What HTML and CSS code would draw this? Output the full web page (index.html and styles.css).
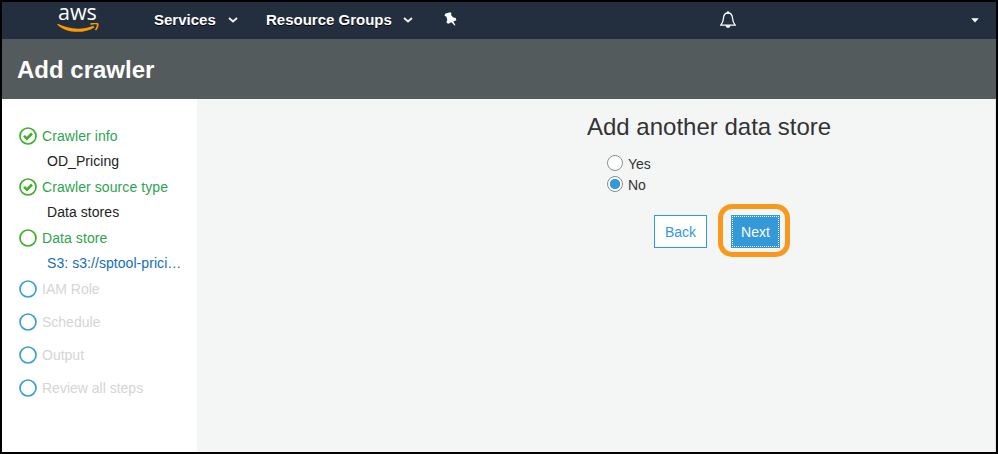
FILE: index.html
```html
<!DOCTYPE html>
<html lang="en">
<head>
<meta charset="utf-8">
<title>Add crawler</title>
<link rel="stylesheet" href="styles.css">
</head>
<body>
<div class="window">
  <nav class="topbar">
    <a class="logo"><span class="logo-text">aws</span>
      <svg class="smile" width="42" height="10" viewBox="0 0 42 10"><path d="M0.800 .8C11 6.300 25 7.300 36.300 2.800L37.300 4.400C27 10.800 10 10.600 .3 1.700Z" fill="#f90"/><path d="M33.500 1.200C36.500 .1 40 .1 40.600 .9C41.200 2 40 5.300 38.500 7" fill="none" stroke="#f90" stroke-width="1.700"/></svg>
    </a>
    <a class="menu services">Services</a>
    <svg class="chev" width="10" height="6" viewBox="0 0 10 6"><path d="M1 1L5 4.500L9 1" fill="none" stroke="#eee" stroke-width="2"/></svg>
    <a class="menu groups">Resource Groups</a>
    <svg class="chev" width="10" height="6" viewBox="0 0 10 6"><path d="M1 1L5 4.500L9 1" fill="none" stroke="#eee" stroke-width="2"/></svg>
    <svg class="pin" width="13" height="14" viewBox="0 0 13 14"><path d="M1.500 1.500L6.300 .2L7.500 1.500L7 2.800L8.900 5.300L11.700 6L12.400 8.300L9.300 9.500L11.500 13.200L10.500 13.600L7.500 10.300L4.200 11.800L2.400 10.400L3.300 7.500L2.200 4.600L.4 3.800Z" fill="#fff"/></svg>
    <svg class="bell" width="16" height="18" viewBox="0 0 16 18"><path d="M8 2C4.700 2 3.700 4.200 3.500 7C3.300 10.500 2.600 12 .8 14.100H15.200C13.400 12 12.700 10.500 12.500 7C12.300 4.200 11.300 2 8 2Z" fill="none" stroke="#fff" stroke-width="1.300"/><circle cx="8" cy="1.500" r="1.200" fill="#fff"/><path d="M5.500 14.500H10.500C10.200 17.600 5.800 17.600 5.500 14.500Z" fill="#fff"/></svg>
    <svg class="caret" width="8" height="5" viewBox="0 0 8 5"><path d="M.2 .3H7.800L4 4.600Z" fill="#fff"/></svg>
  </nav>
  <header class="heading"><h1>Add crawler</h1></header>
  <div class="body">
    <aside class="steps">
      <div class="step done"><svg class="ring" viewBox="0 0 18 18"><circle cx="9" cy="9" r="8"/><path d="M5 8.900L7.900 11.700L13 6.500"/></svg><span>Crawler info</span></div>
      <div class="detail">OD_Pricing</div>
      <div class="step done"><svg class="ring" viewBox="0 0 18 18"><circle cx="9" cy="9" r="8"/><path d="M5 8.900L7.900 11.700L13 6.500"/></svg><span>Crawler source type</span></div>
      <div class="detail">Data stores</div>
      <div class="step done"><svg class="ring" viewBox="0 0 18 18"><circle cx="9" cy="9" r="8"/></svg><span>Data store</span></div>
      <div class="detail link">S3: s3://sptool-prici…</div>
      <div class="step todo"><svg class="ring" viewBox="0 0 18 18"><circle cx="9" cy="9" r="8"/></svg><span>IAM Role</span></div>
      <div class="step todo"><svg class="ring" viewBox="0 0 18 18"><circle cx="9" cy="9" r="8"/></svg><span>Schedule</span></div>
      <div class="step todo"><svg class="ring" viewBox="0 0 18 18"><circle cx="9" cy="9" r="8"/></svg><span>Output</span></div>
      <div class="step todo"><svg class="ring" viewBox="0 0 18 18"><circle cx="9" cy="9" r="8"/></svg><span>Review all steps</span></div>
    </aside>
    <main class="content">
      <h2>Add another data store</h2>
      <div class="options">
        <label class="option"><span class="radio"></span>Yes</label>
        <label class="option"><span class="radio on"></span>No</label>
      </div>
      <div class="actions">
        <button class="btn back">Back</button>
        <div class="highlight"><button class="btn next">Next</button></div>
      </div>
    </main>
  </div>
</div>
</body>
</html>
```
FILE: styles.css
```css
* { box-sizing: border-box; }
body { margin: 0; font: 14px/20px "Liberation Sans", Arial, sans-serif; color: #333; }
h1, h2 { margin: 0; }
svg { display: block; flex: none; }
.window { width: 998px; height: 454px; border: 2px solid #000; display: flex; flex-direction: column; background: #f4f6f6; }
.topbar { height: 37px; flex: none; background: #232f3e; display: flex; align-items: center; padding: 0 17px 0 55px; }
.logo { width: 42px; height: 37px; margin-right: 55px; flex: none; display: flex; flex-direction: column; }
.logo-text { height: 21px; padding-left: 1px; font: 500 21.5px/20px "Open Sans", sans-serif; color: #fff; white-space: nowrap; }
.menu { color: #fff; font-weight: bold; font-size: 15px; line-height: 20px; text-shadow: 0 1px 0 #000; white-space: nowrap; flex: none; margin-top: -2px; }
.services { width: 74px; }
.groups { width: 137px; margin-left: 28px; }
.chev { margin-top: -1px; }
.pin { margin-left: 31px; margin-top: -3px; }
.bell { margin-left: 263px; margin-top: -1px; }
.caret { margin-left: auto; margin-top: -1px; }
.heading { height: 60px; flex: none; background: #545b5d; padding: 16px 15px 0; }
.heading h1 { color: #fff; font-size: 24px; line-height: 30px; }
.body { flex: 1; display: flex; }
.steps { width: 195px; background: #fff; padding: 25px 0 0 17px; }
.step { height: 25px; display: flex; align-items: center; gap: 5px; padding-bottom: 1px; letter-spacing: .08px; }
.ring { width: 18px; height: 18px; fill: none; stroke-width: 1.7; }
.detail { height: 26px; padding-left: 28px; line-height: 25px; color: #222; white-space: nowrap; letter-spacing: .06px; }
.detail.link { color: #146eb4; }
.done { color: #2ea44f; }
.done .ring { stroke: #3eae2b; }
.done path { stroke-width: 2.6; }
.todo { color: #d5d5d5; height: 33px; padding-bottom: 9px; letter-spacing: 0; }
.todo .ring { stroke: #3b9edb; }
.content { flex: 1; border-right: 1px solid #e0e2e2; padding: 13px 0 0 390px; }
.content h2 { font-size: 24px; line-height: 30px; font-weight: normal; white-space: nowrap; }
.options { padding: 10px 0 0 20px; }
.option { display: flex; height: 21px; gap: 5px; line-height: 24px; }
.radio { width: 16px; height: 16px; margin-top: 3px; border: 1px solid #8d8d8d; border-radius: 50%; background: #fff; }
.radio.on { background: radial-gradient(circle, #3399d8 4.8px, #fff 5.400px); }
.actions { display: flex; align-items: center; padding: 10px 0 0 67px; gap: 11px; }
.btn { font: 14px/20px "Liberation Sans", Arial, sans-serif; height: 33px; padding: 1px 0 0; border: 1px solid #3399d8; margin-top: 2px; }
.back { width: 53px; background: #fff; color: #3399d8; }
.highlight { width: 72px; height: 53px; border: 5px solid #fa981d; border-radius: 14px; display: flex; align-items: center; justify-content: center; }
.next { width: 49px; margin-left: 3px; color: #fff; background: #3399d8; outline: 1px dotted #fff; outline-offset: -2px; }
```
